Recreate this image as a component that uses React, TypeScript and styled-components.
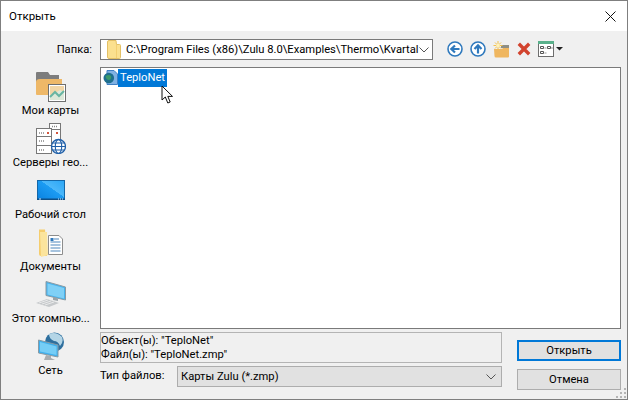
import React from "react";
import styled, {createGlobalStyle} from "styled-components";

const GlobalStyle = createGlobalStyle`
    html, body {
        margin: 0;
        padding: 0;
        background: #f0f0f0;
    }
    * {
        box-sizing: border-box;
    }
`

const FolderIcon = () => (
    <svg width="14" height="19" viewBox="0 0 14 19" style={{flexShrink: 0}}>
        <path d="M0.5 2 Q0.5 0.5 2 0.5 H9 L9.5 4.5 H12.5 Q13.5 4.5 13.5 5.5 V17.5 Q13.5 18.5 12.5 18.5 H2 Q0.5 18.5 0.5 17 Z" fill="#fbe08f" stroke="#e3c066" strokeWidth="1"/>
        <path d="M9.5 5 V18" stroke="#f3cf72" strokeWidth="1"/>
    </svg>
)

const BackIcon = () => (
    <svg width="16" height="16" viewBox="0 0 16 16">
        <circle cx="8" cy="8" r="7" fill="#fff" stroke="#2f79bd" strokeWidth="1.6"/>
        <path d="M12.5 8 H6 M8 4.5 L4.3 8 L8 11.5" fill="none" stroke="#2f79bd" strokeWidth="2.2"/>
    </svg>
)

const UpIcon = () => (
    <svg width="16" height="16" viewBox="0 0 16 16">
        <circle cx="8" cy="8" r="7" fill="#fff" stroke="#2f79bd" strokeWidth="1.6"/>
        <path d="M8 12.5 V6 M4.5 8 L8 4.3 L11.5 8" fill="none" stroke="#2f79bd" strokeWidth="2.2"/>
    </svg>
)

const NewFolderIcon = () => (
    <svg width="17" height="17" viewBox="0 0 17 17">
        <path d="M8 4 H16 V7 H8 Z" fill="#8f8f85"/>
        <path d="M1 8 H9 L10 7 H16 V15.5 Q16 16.5 15 16.5 H3 Q1.5 16.5 1.5 15 Z" fill="#efb65f"/>
        <path d="M5 0 V9 M0.5 4.5 H9.5 M2 1.5 L8 7.5 M8 1.5 L2 7.5" stroke="#f2c14e" strokeWidth="1"/>
        <circle cx="5" cy="4.5" r="1.8" fill="#fff2b8"/>
    </svg>
)

const DeleteIcon = () => (
    <svg width="14" height="14" viewBox="0 0 14 14">
        <path d="M1.8 1.8 L12.2 12.2 M12.2 1.8 L1.8 12.2" stroke="#d2432e" strokeWidth="3.4"/>
    </svg>
)

const ViewIcon = () => (
    <svg width="26" height="16" viewBox="0 0 26 16">
        <rect x="0.5" y="1.5" width="15" height="14" fill="#fff" stroke="#6e6e6e"/>
        <rect x="0" y="0" width="16" height="3" fill="#59b08b"/>
        <path d="M2.5 5.5 h3 v2 h-3z M2.5 10.5 h3 v2 h-3z M9.5 5.5 h3 v2 h-3z" fill="none" stroke="#555" strokeWidth="1"/>
        <path d="M6.5 7 h2 M6.5 12 h2 M13 7 h2" stroke="#999"/>
        <path d="M18 6 H25 L21.5 9.5 Z" fill="#222"/>
    </svg>
)

const MapFileIcon = () => (
    <svg width="15" height="16" viewBox="0 0 15 16" style={{flexShrink: 0}}>
        <path d="M4 0.5 H11 L14.5 4 V14.5 H4 Z" fill="#7fb1e3" stroke="#3e7fc4"/>
        <circle cx="5.8" cy="8" r="5.3" fill="#1f6f8e"/>
        <path d="M2.5 6 Q6 4 8 6 Q9 9 6 10 Q3 10 2.5 6Z" fill="#3a9a6a"/>
    </svg>
)

const MyMapsIcon = () => (
    <svg width="30" height="30" viewBox="0 0 30 30">
        <path d="M0 1 Q0 0 1 0 H12 L14 3 H23 V12 H0 Z" fill="#7d7d7d"/>
        <path d="M4 7 H26 V23 H1 Q0 23 0 22 L0 10 Q0 7 4 7 Z" fill="#eeb868"/>
        <rect x="12.5" y="12.5" width="17" height="17" fill="#fff" stroke="#6f6f6f"/>
        <rect x="14" y="14" width="14" height="14" fill="#dce8d8"/>
        <path d="M14 14 H28 V20 L24 18 L19 21 L14 23 Z" fill="#f2d6a6"/>
        <path d="M14 25 L19 20 L23 24 L28 19" fill="none" stroke="#67b5a2" strokeWidth="2"/>
    </svg>
)

const ServersIcon = () => (
    <svg width="31" height="31" viewBox="0 0 31 31">
        <rect x="14.5" y="0.5" width="11" height="20" fill="#fff" stroke="#777"/>
        <rect x="1.5" y="5.5" width="15" height="25" fill="#fff" stroke="#777"/>
        <path d="M1.5 13.5 H16.5 M1.5 22.5 H16.5 M16.5 6.5 H25.5" stroke="#777"/>
        <path d="M4 10 H10 M4 18 H10 M4 27 H10 M17 3.5 H23" stroke="#888" strokeWidth="1.6" strokeDasharray="1 1"/>
        <rect x="12" y="9" width="2" height="2" fill="#d2553c"/>
        <rect x="21" y="9" width="2" height="2" fill="#d2553c"/>
        <circle cx="23.5" cy="23.5" r="7" fill="#fff" stroke="#1f5fa8" strokeWidth="1.3"/>
        <ellipse cx="23.5" cy="23.5" rx="3.2" ry="7" fill="none" stroke="#1f5fa8" strokeWidth="1.1"/>
        <path d="M16.5 23.5 H30.5 M17.5 20 H29.5 M17.5 27 H29.5" stroke="#1f5fa8" strokeWidth="1.1"/>
    </svg>
)

const DesktopIcon = () => (
    <svg width="28" height="26" viewBox="0 0 28 26">
        <defs>
            <linearGradient id="desk" x1="0" y1="1" x2="1" y2="0">
                <stop offset="0" stopColor="#0a82e0"/>
                <stop offset="0.55" stopColor="#1c9cf3"/>
                <stop offset="0.56" stopColor="#4cb8fa"/>
                <stop offset="1" stopColor="#2aa6f6"/>
            </linearGradient>
        </defs>
        <rect x="0.5" y="0.5" width="27" height="19" fill="url(#desk)" stroke="#1467a8"/>
        <rect x="0" y="18.5" width="28" height="1.5" fill="#0f4f86"/>
        <path d="M2 19 h2 M21 19 h1 M23 19 h1 M25 19 h1" stroke="#cfeaff"/>
    </svg>
)

const DocumentsIcon = () => (
    <svg width="24" height="29" viewBox="0 0 24 29">
        <path d="M0 0.5 H6 L8 27 H2 Q0 27 0 25 Z" fill="#f5cd6d"/>
        <path d="M1 3 H8 L9 26 L2 28 Z" fill="#fbe49d"/>
        <path d="M9.5 6.5 H20 L23.5 10 V25.5 H9.5 Z" fill="#fff" stroke="#8d8d8d"/>
        <path d="M15 10 H20 M11.5 13 H21.5 M11.5 16 H21.5 M11.5 19 H21.5 M11.5 22 H21.5" stroke="#4e87bd" strokeWidth="1.2"/>
        <rect x="11.5" y="9" width="3" height="3" fill="#2f79bd"/>
    </svg>
)

const ComputerIcon = () => (
    <svg width="30" height="29" viewBox="0 0 30 29">
        <path d="M10 0.5 L29.5 6 V19 L10 14.5 Z" fill="#46b3ee" stroke="#8a9aa3"/>
        <path d="M11.5 2.5 L28 7 V17.5 L11.5 13.5 Z" fill="#7fd0f6"/>
        <path d="M17 16 L22 17.5 V20 L17 19 Z" fill="#9aa3a8"/>
        <path d="M0 22 L11 18 L23 22 L13 26 Z" fill="#c6c9cb"/>
        <path d="M3 22 L12 19 M6 23 L15 20 M9 24 L18 21" stroke="#e8e9ea"/>
    </svg>
)

const NetworkIcon = () => (
    <svg width="26" height="30" viewBox="0 0 26 30">
        <circle cx="16.5" cy="10" r="9.5" fill="#2e6f9e"/>
        <path d="M11 2 Q18 -1 24 5 Q26 10 22 14 Q20 9 16 9 Q11 7 11 2Z" fill="#b4d5e6"/>
        <path d="M0.5 8 L20 13 V25 L0.5 21 Z" fill="#3fb0ee" stroke="#8a9aa3"/>
        <path d="M2 10 L18.5 14.5 V23 L2 19.5 Z" fill="#75cdf6"/>
        <path d="M8 23 L13 24 V26 L17 28 H6 Z" fill="#a9adb0"/>
    </svg>
)

const CursorIcon = () => (
    <svg width="15" height="20" viewBox="0 0 15 20">
        <path d="M1 1 V15 L4.3 12 L6.8 18 L9.2 17 L6.8 11.4 H11.5 Z" fill="#fff" stroke="#111" strokeWidth="1"/>
    </svg>
)

const ChevronIcon = () => (
    <svg width="10" height="6" viewBox="0 0 10 6" style={{flexShrink: 0}}>
        <path d="M0.5 0.5 L5 5 L9.5 0.5" fill="none" stroke="#555" strokeWidth="1"/>
    </svg>
)

const places = [
    {label: 'Мои карты', icon: <MyMapsIcon/>},
    {label: 'Серверы гео...', icon: <ServersIcon/>},
    {label: 'Рабочий стол', icon: <DesktopIcon/>},
    {label: 'Документы', icon: <DocumentsIcon/>},
    {label: 'Этот компью...', icon: <ComputerIcon/>},
    {label: 'Сеть', icon: <NetworkIcon/>},
]

export default function App() {
    return (
        <Dialog>
            <GlobalStyle/>
            <TitleBar>
                <Title>Открыть</Title>
                <CloseButton>
                    <svg width="11" height="11" viewBox="0 0 11 11">
                        <path d="M0.5 0.5 L10.5 10.5 M10.5 0.5 L0.5 10.5" stroke="#111" strokeWidth="1"/>
                    </svg>
                </CloseButton>
            </TitleBar>
            <Body>
                <TopRow>
                    <FolderLabel>Папка:</FolderLabel>
                    <PathBox>
                        <FolderIcon/>
                        <PathText>C:\Program Files (x86)\Zulu 8.0\Examples\Thermo\Kvartal</PathText>
                        <ChevronIcon/>
                    </PathBox>
                    <ToolBar>
                        <BackIcon/>
                        <UpIcon/>
                        <NewFolderIcon/>
                        <DeleteIcon/>
                        <ViewIcon/>
                    </ToolBar>
                </TopRow>
                <Content>
                    <Places>
                        {places.map(p => (
                            <Place key={p.label}>
                                <PlaceIcon>{p.icon}</PlaceIcon>
                                <PlaceLabel>{p.label}</PlaceLabel>
                            </Place>
                        ))}
                    </Places>
                    <MainColumn>
                        <FileList>
                            <FileItem>
                                <MapFileIcon/>
                                <FileName>TeploNet</FileName>
                            </FileItem>
                            <CursorWrap><CursorIcon/></CursorWrap>
                        </FileList>
                        <BottomGrid>
                            <InfoColumn>
                                <InfoBox>
                                    <div>Объект(ы): "TeploNet"</div>
                                    <div>Файл(ы): "TeploNet.zmp"</div>
                                </InfoBox>
                                <TypeRow>
                                    <TypeLabel>Тип файлов:</TypeLabel>
                                    <TypeSelect>
                                        <span>Карты Zulu (*.zmp)</span>
                                        <ChevronIcon/>
                                    </TypeSelect>
                                </TypeRow>
                            </InfoColumn>
                            <ButtonColumn>
                                <DialogButton $primary>Открыть</DialogButton>
                                <DialogButton>Отмена</DialogButton>
                            </ButtonColumn>
                        </BottomGrid>
                    </MainColumn>
                </Content>
            </Body>
            <Grip>
                <svg width="11" height="11" viewBox="0 0 11 11">
                    <path d="M8 0h2v2h-2z M4 4h2v2h-2z M8 4h2v2h-2z M0 8h2v2h-2z M4 8h2v2h-2z M8 8h2v2h-2z" fill="#b4b4b4"/>
                </svg>
            </Grip>
        </Dialog>
    );
}

const Dialog = styled.div`
    position: relative;
    width: 628px;
    height: 400px;
    display: flex;
    flex-direction: column;
    background: #f0f0f0;
    border: 1px solid #7f7f7f;
    font-family: Roboto, "Noto Sans", sans-serif;
    font-size: 11.2px;
    color: #000;
    overflow: hidden;
`

const TitleBar = styled.div`
    height: 30px;
    flex-shrink: 0;
    background: #fff;
    display: flex;
    align-items: center;
    justify-content: space-between;
    padding: 0 11px 0 8px;
`

const Title = styled.span`
    font-size: 11.5px;
`

const CloseButton = styled.div`
    display: flex;
`

const Body = styled.div`
    flex: 1;
    display: flex;
    flex-direction: column;
    padding: 8px 6px 0 0;
`

const TopRow = styled.div`
    height: 21px;
    display: flex;
    align-items: center;
`

const FolderLabel = styled.span`
    width: 91px;
    text-align: right;
    margin-right: 8px;
`

const PathBox = styled.div`
    width: 333px;
    height: 21px;
    flex-shrink: 0;
    background: #fff;
    border: 1px solid #7a7a7a;
    display: flex;
    align-items: center;
    padding: 0 6px;
`

const PathText = styled.span`
    flex: 1;
    margin-left: 5px;
    white-space: nowrap;
`

const ToolBar = styled.div`
    display: flex;
    align-items: center;
    gap: 7px;
    margin: 0 0 1px 14px;
`

const Content = styled.div`
    flex: 1;
    display: flex;
    margin-top: 7px;
`

const Places = styled.div`
    width: 99px;
    display: flex;
    flex-direction: column;
`

const Place = styled.div`
    height: 52px;
    display: flex;
    flex-direction: column;
    align-items: center;
    justify-content: flex-end;
`

const PlaceIcon = styled.div`
    flex: 1;
    display: flex;
    align-items: flex-end;
    justify-content: center;
    & > svg {
        display: block;
    }
`

const PlaceLabel = styled.span`
    height: 17px;
    line-height: 17px;
    white-space: nowrap;
`

const MainColumn = styled.div`
    flex: 1;
    display: flex;
    flex-direction: column;
`

const FileList = styled.div`
    position: relative;
    height: 262px;
    background: #fff;
    border: 1px solid #7a7a7a;
    padding: 1px 2px;
`

const FileItem = styled.div`
    display: flex;
    align-items: center;
`

const FileName = styled.span`
    background: #0078d7;
    color: #fff;
    padding: 0 2px;
    height: 18px;
    line-height: 18px;
`

const CursorWrap = styled.div`
    position: absolute;
    left: 60px;
    top: 17px;
`

const BottomGrid = styled.div`
    display: flex;
    justify-content: space-between;
    margin-top: 3px;
`

const InfoColumn = styled.div`
    width: 402px;
    display: flex;
    flex-direction: column;
    gap: 3px;
`

const InfoBox = styled.div`
    height: 31px;
    border: 1px solid #b4b4b4;
    line-height: 14px;
    padding-top: 1px;
    white-space: nowrap;
`

const TypeRow = styled.div`
    display: flex;
    align-items: center;
`

const TypeLabel = styled.span`
    width: 77px;
    padding-bottom: 3px;
`

const TypeSelect = styled.div`
    flex: 1;
    height: 21px;
    background: #e1e1e1;
    border: 1px solid #adadad;
    display: flex;
    align-items: center;
    justify-content: space-between;
    padding: 0 5px 0 3px;
`

const ButtonColumn = styled.div`
    width: 104px;
    display: flex;
    flex-direction: column;
    gap: 8px;
    padding-top: 8px;
`

const DialogButton = styled.div<{$primary?: boolean}>`
    height: 21px;
    background: #e1e1e1;
    border: ${p => (p.$primary ? '2px solid #0078d7' : '1px solid #adadad')};
    display: flex;
    align-items: center;
    justify-content: center;
`

const Grip = styled.div`
    position: absolute;
    right: 0;
    bottom: 0;
    display: flex;
`
